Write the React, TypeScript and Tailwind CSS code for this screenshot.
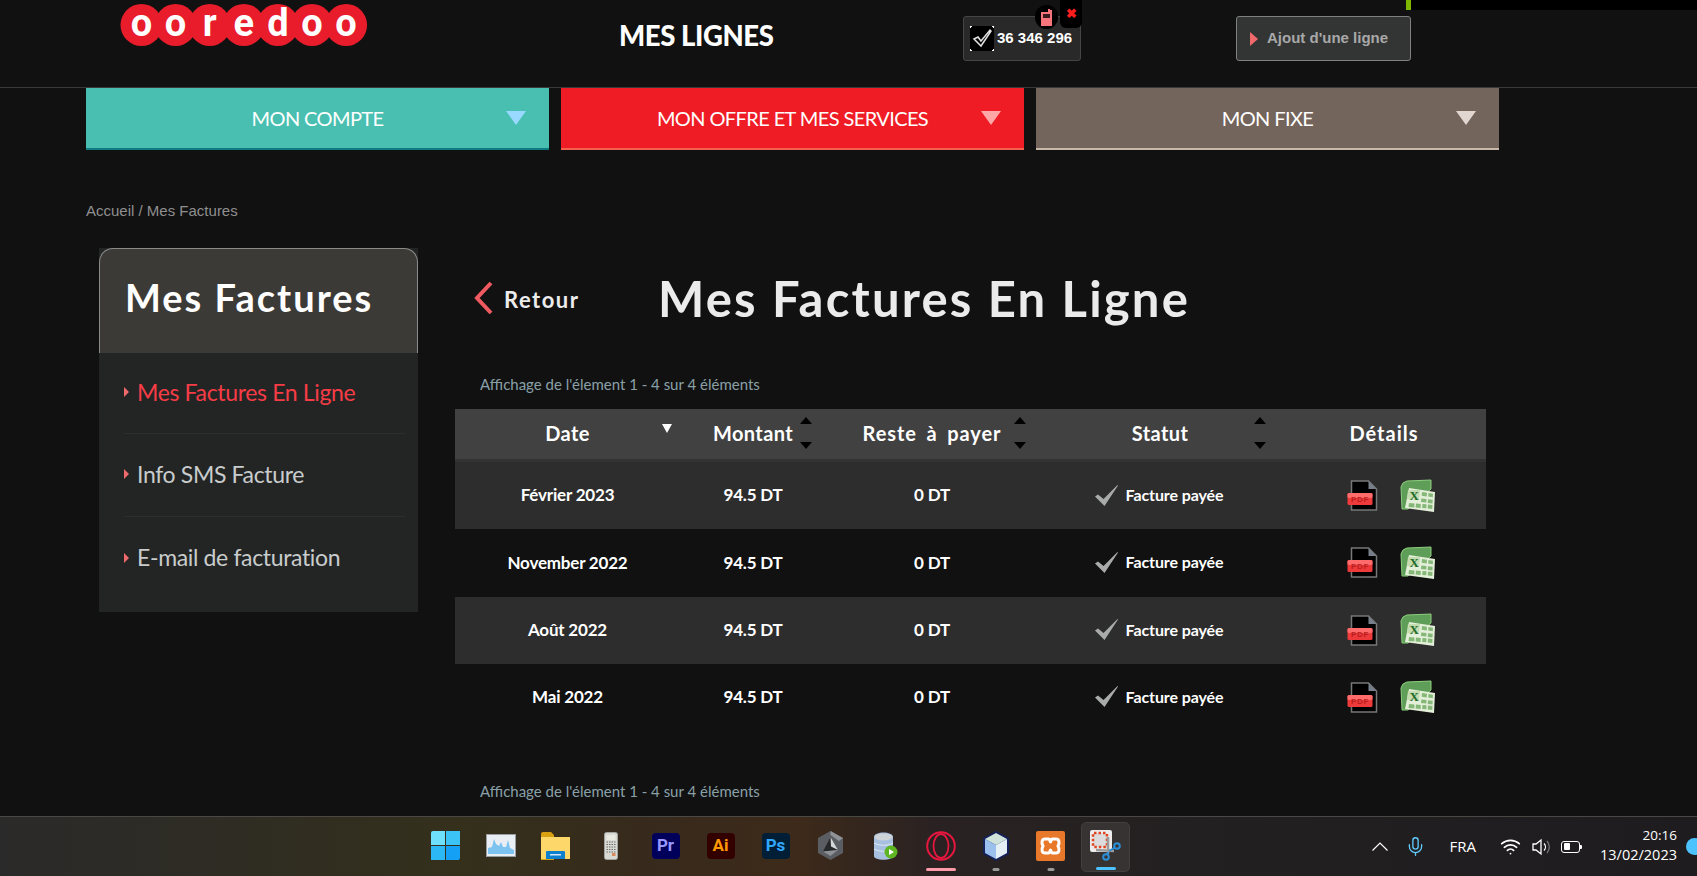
import { Mic, Wifi } from 'lucide-react';

const lato = { fontFamily: 'Lato, sans-serif' };

const rows = ['Février 2023', 'November 2022', 'Août 2022', 'Mai 2022'];

function Logo() {
  const letters = ['o', 'o', 'r', 'e', 'd', 'o', 'o'];
  return (
    <svg width="248" height="50" viewBox="0 0 248 50">
      {letters.map((_, i) => (
        <circle key={i} cx={21.5 + i * 34.1} cy="25" r="21" fill="#e81c2b" />
      ))}
      {letters.map((l, i) => (
        <text key={i} x={21.5 + i * 34.1} y="35.500" textAnchor="middle" fontSize="38" fontWeight="700" fill="#fff" fontFamily="Roboto, sans-serif">
          {l}
        </text>
      ))}
    </svg>
  );
}

function NavTab({ label, bg, edge, arrow }: { label: string; bg: string; edge: string; arrow: string }) {
  return (
    <div className={`relative w-[463px] h-[62px] flex items-center justify-center border-b-2 ${bg} ${edge}`}>
      <span className="text-white text-[20px] tracking-[-0.6px]" style={lato}>{label}</span>
      <div className={`absolute right-[23px] top-[23px] w-0 h-0 border-x-[10px] border-x-transparent border-t-[14px] ${arrow}`} />
    </div>
  );
}

function SideItem({ label, active, last }: { label: string; active?: boolean; last?: boolean }) {
  return (
    <div className={`flex items-center gap-[8px] pb-[2px] ${active ? 'h-[81px]' : 'h-[83px]'} ${last ? '' : 'border-b border-[#2c2e2e]'}`}>
      <div className="w-0 h-0 border-y-[5px] border-y-transparent border-l-[5px] border-l-[#f2696b]" />
      <span className={`text-[23px] tracking-[-0.35px] ${active ? 'text-[#f73c46]' : 'text-[#c9cccc]'}`} style={lato}>{label}</span>
    </div>
  );
}

function SortArrows({ className }: { className: string }) {
  return (
    <div className={`absolute top-[8px] h-[32px] flex flex-col justify-between ${className}`}>
      <div className="w-0 h-0 border-x-[6px] border-x-transparent border-b-[7px] border-b-black" />
      <div className="w-0 h-0 border-x-[6px] border-x-transparent border-t-[7px] border-t-black" />
    </div>
  );
}

function Tick() {
  return (
    <svg width="23" height="21" viewBox="0 0 23 21">
      <path d="M0 11.500 3 9.500 8.500 14 22.500 0 23 .6 9.500 21z" fill="#a9abab" />
    </svg>
  );
}

function PdfIcon() {
  return (
    <svg width="32" height="33" viewBox="0 0 32 33">
      <path d="M4.500 2h17l8 8v21h-25z" fill="#000" stroke="#777" strokeWidth="1.500" />
      <path d="M21.500 2v8h8z" fill="#77808a" />
      <rect x="0.500" y="14" width="25" height="12" rx="1.500" fill="#ee3a3a" />
      <rect x="0.500" y="14" width="25" height="5" rx="1.500" fill="#ff6b6b" />
      <text x="13" y="23" textAnchor="middle" fontSize="8" letterSpacing="0.6" fill="#b91f1f" fontFamily="Liberation Sans, sans-serif">PDF</text>
    </svg>
  );
}

function ExcelIcon() {
  return (
    <svg width="36" height="34" viewBox="0 0 36 34">
      <path d="M1 8 Q2 3 7 2 L31 1 L31 10 L8 30 L2 30z" fill="#5f9e58" stroke="#8ccf7e" strokeWidth="1" />
      <path d="M5 29 L9 9 L35 13 L34 33z" fill="#e4efd9" />
      <path d="M8 11h12l-1 9H7z" fill="#c4dcb0" />
      <text x="14" y="21" textAnchor="middle" fontSize="13" fontWeight="700" fill="#1e6b2a" fontFamily="Liberation Serif, serif">X</text>
      <path d="M22 13l5 .8-.3 3.600-5-.6zM28.500 14l4.500.7-.2 3.500-4.600-.6zM21.300 19.500l5.200.6-.2 3.500-5.300-.5zM28 20.300l4.700.5-.2 3.600-4.800-.5zM9 24l5.500.4-.2 4-5.800-.3zM16 24.500l4.800.4-.2 4-5-.3zM22.500 25l4 .3-.2 4-4.100-.3zM28 25.500l4.500.4-.2 4-4.600-.3z" fill="#85b878" />
    </svg>
  );
}

function Row({ date, dark }: { date: string; dark: boolean }) {
  return (
    <div className={`grid grid-cols-[225px_146px_212px_244px_204px] items-center h-[67.250px] text-white text-[17px] font-bold tracking-[-0.2px] ${dark ? 'bg-[#2d2d2d]' : ''}`} style={lato}>
      <div className="text-center pb-[1px]">{date}</div>
      <div className="text-center pb-[1px]">94.5 DT</div>
      <div className="text-center pb-[1px]">0 DT</div>
      <div className="flex items-center justify-center gap-[8px] pr-[2px] pb-[1px]">
        <Tick />
        <span className="text-[16px] tracking-[-0.1px]">Facture payée</span>
      </div>
      <div className="flex items-center justify-center gap-[21px] pl-[14px]">
        <PdfIcon />
        <ExcelIcon />
      </div>
    </div>
  );
}

function Windows() {
  return (
    <div className="grid grid-cols-2 gap-[1px] w-[29px] h-[29px]">
      <div className="bg-[#6fe0fb] rounded-tl-[2px]" />
      <div className="bg-[#3cc3f5]" />
      <div className="bg-[#2bb8f5]" />
      <div className="bg-[#13a0f5] rounded-br-[2px]" />
    </div>
  );
}

function Monitor() {
  return (
    <svg width="30" height="23" viewBox="0 0 30 23">
      <rect x="0.500" y="0.500" width="29" height="22" fill="#e8eef4" stroke="#9a9ea2" />
      <path d="M2 20V14L6 13 8 5 10 10 13 12 15 8 17 13 20 13 22 6 24 14 28 16V20z" fill="#7cc3f0" />
    </svg>
  );
}

function Folder() {
  return (
    <svg width="31" height="29" viewBox="0 0 31 29">
      <path d="M1 3q0-2 2-2h8l3 3h0v25H1z" fill="#d9a011" />
      <path d="M1 6h29v22H1z" fill="#fdd769" />
      <path d="M6 21q0-1 1-1h17q1 0 1 1v7H6z" fill="#0d7fcf" />
      <rect x="10" y="23" width="11" height="1.500" fill="#cfe8fa" />
    </svg>
  );
}

function Calc() {
  return (
    <svg width="14" height="28" viewBox="0 0 14 28">
      <rect x="0.500" y="0.500" width="13" height="27" rx="2" fill="#d9d9d4" stroke="#a3a3a0" />
      <rect x="2.500" y="3" width="9" height="5" fill="#e8e9df" />
      <path d="M2.500 10h9M2.500 12.500h9M2.500 15h9M2.500 17.500h9M2.500 20h9" stroke="#6c6c6c" strokeWidth="1.200" strokeDasharray="1.500 1" />
      <rect x="8" y="21" width="3.500" height="3" fill="#d98c5a" />
    </svg>
  );
}

function Tile({ text, bg, fg }: { text: string; bg: string; fg: string }) {
  return (
    <div className={`w-[28px] h-[26px] rounded-[4px] flex items-center justify-center text-[17px] font-bold ${bg} ${fg}`} style={{ fontFamily: 'Roboto, sans-serif' }}>
      {text}
    </div>
  );
}

function Hexa() {
  return (
    <svg width="27" height="29" viewBox="0 0 27 29">
      <path d="M13.500 0 26 7v15l-12.500 7L1 22V7z" fill="#5a5d61" />
      <path d="M13.500 0 26 7l-4 3-8.500-6z" fill="#8f9296" />
      <path d="M13.500 6 21 19 6 20.500z" fill="#26282b" />
      <path d="M13.500 6 21 19l-7-3.500z" fill="#d4d6d8" />
      <path d="M6 20.500 21 19l-7.500 6z" fill="#8d9094" />
    </svg>
  );
}

function Db() {
  return (
    <svg width="24" height="28" viewBox="0 0 24 28">
      <path d="M0 5c0-6 19-6 19 0v19c0 5-19 5-19 0z" fill="#a8c0e0" />
      <ellipse cx="9.500" cy="5" rx="9" ry="3.500" fill="#ced3d8" />
      <path d="M0 11c5 3 14 3 19 0M0 17c5 3 14 3 19 0" stroke="#dfe8f2" fill="none" />
      <circle cx="17" cy="20" r="6.500" fill="#5cb521" />
      <path d="M15 17l5 3-5 3z" fill="#fff" />
    </svg>
  );
}

function Opera() {
  return (
    <svg width="30" height="30" viewBox="0 0 30 30">
      <ellipse cx="15" cy="15" rx="13.800" ry="13.800" fill="none" stroke="#e5173f" strokeWidth="2" />
      <ellipse cx="15" cy="15" rx="7.500" ry="12" fill="none" stroke="#e5173f" strokeWidth="1.800" />
    </svg>
  );
}

function Cube() {
  return (
    <svg width="28" height="30" viewBox="0 0 28 30">
      <path d="M14 0 27 7v16l-13 7-13-7V7z" fill="#14205a" />
      <path d="M14 2 25 8l-11 6L3 8z" fill="#cfe3da" />
      <path d="M3 8l11 6v14L3 22z" fill="#9cc0ee" />
      <path d="M25 8l-11 6v14l11-6z" fill="#e4f0f4" />
    </svg>
  );
}

function Xampp() {
  return (
    <div className="w-[29px] h-[30px] rounded-[2px] bg-[#e8792a] flex items-center justify-center">
      <svg width="23" height="20" viewBox="0 0 23 20">
        <path d="M6 3h3.500c1.500 0 1.500 3 2 3s.5-3 2-3H17c3 0 4 3.500 2 7 2 3.500 1 7-2 7h-3.500c-1.500 0-1.500-3-2-3s-.5 3-2 3H6c-3 0-4-3.500-2-7-2-3.500-1-7 2-7z" fill="none" stroke="#fff" strokeWidth="3" />
      </svg>
    </div>
  );
}

function Snip() {
  return (
    <svg width="31" height="31" viewBox="0 0 31 31">
      <rect x="0" y="0" width="22" height="22" rx="2" fill="#ececec" />
      <rect x="3" y="3" width="14" height="14" rx="1" fill="#dcdcdc" stroke="#e2441f" strokeWidth="2.500" strokeDasharray="2.500 2" />
      <path d="M6 20 24 21" stroke="#9a9a9a" strokeWidth="2.500" />
      <path d="M18 7 18 24" stroke="#9a9a9a" strokeWidth="2.500" />
      <circle cx="27" cy="16" r="2.800" fill="none" stroke="#2a8fd8" strokeWidth="2" />
      <circle cx="16" cy="27" r="2.800" fill="none" stroke="#2a8fd8" strokeWidth="2" />
      <path d="M19 21 25 17.500M18 22 17 25" stroke="#2a8fd8" strokeWidth="1.800" />
    </svg>
  );
}

function TaskIcon({ children, dot, active }: { children: React.ReactNode; dot?: string; active?: boolean }) {
  return (
    <div className={`relative w-[49px] h-[50px] mx-[3px] rounded-[5px] flex items-center justify-center ${active ? 'bg-[#373332] border border-[#433f3e]' : ''}`}>
      <div className="-translate-y-[1px] flex items-center justify-center">{children}</div>
      {dot && <div className={`absolute bottom-[1px] left-1/2 -translate-x-1/2 h-[3px] rounded-full ${dot}`} />}
    </div>
  );
}

function Taskbar() {
  return (
    <div className="relative h-[60px] shrink-0 border-t border-[#4a4844] bg-[linear-gradient(90deg,#2b2a2a_0%,#2e2c24_12%,#34301c_27%,#372a1c_38%,#3d2a1a_47%,#2a2222_55%,#232021_70%,#1f1c20_100%)] flex items-center">
      <div className="ml-[418px] flex items-center">
        <TaskIcon><Windows /></TaskIcon>
        <TaskIcon><Monitor /></TaskIcon>
        <TaskIcon><Folder /></TaskIcon>
        <TaskIcon><Calc /></TaskIcon>
        <TaskIcon><Tile text="Pr" bg="bg-[#00005b]" fg="text-[#9999ff]" /></TaskIcon>
        <TaskIcon><Tile text="Ai" bg="bg-[#330000]" fg="text-[#ff9a00]" /></TaskIcon>
        <TaskIcon><Tile text="Ps" bg="bg-[#001e36]" fg="text-[#31a8ff]" /></TaskIcon>
        <TaskIcon><Hexa /></TaskIcon>
        <TaskIcon><Db /></TaskIcon>
        <TaskIcon dot="w-[30px] bg-[#ff9aa8]"><Opera /></TaskIcon>
        <TaskIcon dot="w-[7px] bg-[#9a9a9a]"><Cube /></TaskIcon>
        <TaskIcon dot="w-[7px] bg-[#9a9a9a]"><Xampp /></TaskIcon>
        <TaskIcon active dot="w-[20px] bg-[#4cc2ff]"><Snip /></TaskIcon>
      </div>
      <div className="ml-auto flex items-center text-white" style={{ fontFamily: 'Open Sans, sans-serif' }}>
        <svg width="16" height="9" viewBox="0 0 16 9">
          <path d="M.5 8.500 8 1l7.500 7.500" fill="none" stroke="#fff" strokeWidth="1.200" />
        </svg>
        <Mic size={21} strokeWidth={1.5} className="ml-[17px] text-[#60cdff]" />
        <span className="ml-[24px] text-[15px]">FRA</span>
        <Wifi size={21} strokeWidth={2} className="ml-[24px]" />
        <svg width="21" height="20" viewBox="0 0 21 20" className="ml-[11px]">
          <path d="M1 7h3l5-4v14l-5-4H1z" fill="none" stroke="#fff" strokeWidth="1.300" />
          <path d="M12 6.500a5 5 0 0 1 0 7" fill="none" stroke="#fff" strokeWidth="1.300" />
          <path d="M15 4a9 9 0 0 1 0 12" fill="none" stroke="#777" strokeWidth="1.300" />
        </svg>
        <div className="ml-[8px] relative w-[19px] h-[12px] border border-white rounded-[3px] p-[1.500px]">
          <div className="w-[6px] h-full bg-white rounded-[1px]" />
          <div className="absolute -right-[3px] top-[3px] w-[2px] h-[4px] bg-white rounded-r-[1px]" />
        </div>
        <div className="ml-[20px] mr-[20px] pb-[4px] flex flex-col items-end text-[14.500px] leading-[20px]">
          <span className="text-[13.500px]">20:16</span>
          <span>13/02/2023</span>
        </div>
      </div>
      <div className="absolute -right-[6px] top-[21px] w-[17px] h-[17px] rounded-full bg-[#4cc2ff]" />
    </div>
  );
}

export default function App() {
  return (
    <div className="h-[876px] flex flex-col overflow-hidden bg-[#111111]">
      <div className="flex-1 overflow-hidden">
        {/* header */}
        <div className="relative h-[88px] border-b border-[#3a3a3a] flex items-start pl-[120px]">
          <Logo />
          <h1 className="ml-[251px] mt-[20px] w-[156px] text-white text-[27.500px] font-black tracking-[-0.4px] leading-[32px] whitespace-nowrap" style={lato}>MES LIGNES</h1>
          <div className="relative ml-[188px] mt-[16px] w-[118px] h-[45px] bg-[#292929] border border-[#454545] rounded-[3px] flex items-center pl-[6px]" style={{ fontFamily: 'Liberation Sans, sans-serif' }}>
            <svg width="24" height="25" viewBox="0 0 24 25">
              <rect width="24" height="25" fill="#000" />
              <path d="M0 0h2v1H1v1H0zM22 0h2v2h-1V1h-1zM0 23h1v1h1v1H0zM23 23h1v2h-2v-1h1z" fill="#fff" />
              <path d="M4 13 8 11 11 15 20 4 21 5 11 20z" fill="none" stroke="#e2e2e2" strokeWidth="1.500" />
            </svg>
            <span className="ml-[3px] text-white text-[15px] font-bold whitespace-nowrap">36 346 296</span>
            <div className="absolute -top-[12px] left-[71px] w-[23px] h-[24px] rounded-full bg-black flex items-center justify-center">
              <svg width="11" height="17" viewBox="0 0 11 17">
                <path d="M0 3h7V0h2v1h2v16H0z" fill="#f8747c" />
                <rect x="2" y="5" width="7" height="4" fill="#3a1a1c" />
              </svg>
            </div>
            <div className="absolute -top-[17px] left-[96px] w-[22px] h-[28px] rounded-b-[6px] bg-black flex items-center justify-center text-[#ff1d1d] text-[13px] font-bold">✖</div>
          </div>
          <div className="ml-[155px] mt-[16px] w-[175px] h-[45px] bg-[#333535] border border-[#808080] rounded-[3px] flex items-center pl-[13px]" style={{ fontFamily: 'Liberation Sans, sans-serif' }}>
            <div className="w-0 h-0 border-y-[7px] border-y-transparent border-l-[8px] border-l-[#f2696b]" />
            <span className="ml-[9px] text-[#a8a8a8] text-[15px] font-bold whitespace-nowrap">Ajout d'une ligne</span>
          </div>
          <div className="absolute top-0 right-0 w-[291px] h-[10px] bg-black border-l-[5px] border-[#7fb800]" />
        </div>

        {/* menu */}
        <div className="flex gap-[12px] pl-[86px]">
          <NavTab label="MON COMPTE" bg="bg-[#48bfb0]" edge="border-[#0f7a80]" arrow="border-t-[#99d9ff]" />
          <NavTab label="MON OFFRE ET MES SERVICES" bg="bg-[#ef1c25]" edge="border-[#f4604f]" arrow="border-t-[#ffa6a6]" />
          <NavTab label="MON FIXE" bg="bg-[#73645c]" edge="border-[#c9b8a8]" arrow="border-t-[#e2d6d0]" />
        </div>

        <div className="pl-[86px] mt-[51px] text-[15px] leading-[20px] text-[#8f8f8f]" style={{ fontFamily: 'Liberation Sans, sans-serif' }}>Accueil / Mes Factures</div>

        <div className="flex items-start mt-[27px] pl-[99px]">
          {/* sidebar */}
          <aside className="w-[319px] bg-[#232525]">
            <div className="h-[105px] bg-[#3c3a36] border border-b-0 border-[#8a8a8a] rounded-t-[14px] pl-[25px] pt-[24px]">
              <h2 className="text-white text-[38px] font-bold leading-[48px] tracking-[2px] whitespace-nowrap" style={lato}>Mes Factures</h2>
            </div>
            <div className="pl-[25px] pr-[13px] pb-[12px]">
              <SideItem label="Mes Factures En Ligne" active />
              <SideItem label="Info SMS Facture" />
              <SideItem label="E-mail de facturation" last />
            </div>
          </aside>

          {/* content */}
          <main className="ml-[37px] w-[1031px]">
            <div className="flex items-center h-[100px]">
              <div className="ml-[19px] flex items-center w-[184px]">
                <svg width="20" height="34" viewBox="0 0 20 34">
                  <path d="M17 2 3 17l14 15" fill="none" stroke="#ee5a5f" strokeWidth="4" />
                </svg>
                <span className="ml-[10px] pt-[2px] text-[#ececec] text-[22px] font-bold tracking-[1.5px]" style={lato}>Retour</span>
              </div>
              <h1 className="text-[#ebebeb] text-[49px] font-bold tracking-[2.2px] leading-none whitespace-nowrap" style={lato}>Mes Factures En Ligne</h1>
            </div>
            <div className="pl-[25px] mt-[26px] text-[15px] leading-[20px] text-[#8aa0a8]" style={lato}>Affichage de l'élement 1 - 4 sur 4 éléments</div>
            <div className="mt-[15px]">
              <div className="border-b-[3px] border-[#333333]">
                <div className="relative grid grid-cols-[225px_146px_212px_244px_204px] items-center h-[50px] pb-[2px] bg-[#414141] text-white text-[20px] font-bold tracking-[0.4px]" style={lato}>
                  <div className="relative text-center">
                    Date
                    <div className="absolute left-[207px] top-[6px] w-0 h-0 border-x-[5px] border-x-transparent border-t-[9px] border-t-white" />
                  </div>
                  <div className="text-center">Montant</div>
                  <div className="text-center tracking-[0.9px] [word-spacing:4px]">Reste à payer</div>
                  <div className="text-center">Statut</div>
                  <div className="text-center tracking-[1px]">Détails</div>
                  <SortArrows className="left-[345px]" />
                  <SortArrows className="left-[559px]" />
                  <SortArrows className="left-[799px]" />
                </div>
              </div>
              {rows.map((d, i) => (
                <Row key={d} date={d} dark={i % 2 === 0} />
              ))}
            </div>
            <div className="pl-[25px] mt-[50px] text-[15px] leading-[20px] text-[#8aa0a8]" style={lato}>Affichage de l'élement 1 - 4 sur 4 éléments</div>
          </main>
        </div>
      </div>
      <Taskbar />
    </div>
  );
}
